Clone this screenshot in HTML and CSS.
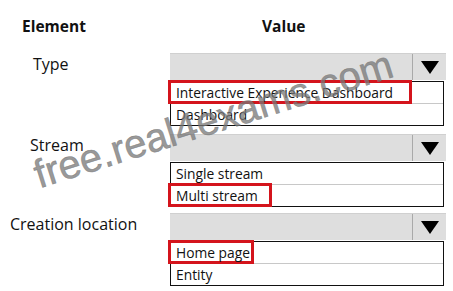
FILE: index.html
```html
<!DOCTYPE html>
<html lang="en">
<head>
    <meta charset="UTF-8">
    <title>Element / Value</title>
    <link rel="stylesheet" href="styles.css">
</head>
<body>
    <div class="sheet">
        <div class="head">
            <div class="col-label head-element">Element</div>
            <div class="col-value head-value">Value</div>
        </div>

        <div class="row row-type">
            <div class="col-label label-type">Type</div>
            <div class="col-value">
                <div class="drop">
                    <div class="drop-field"></div>
                    <div class="drop-btn"><span class="arrow"></span></div>
                </div>
                <div class="list">
                    <div class="item"><span class="pick pick-type">Interactive Experience Dashboard</span></div>
                    <div class="item">Dashboard</div>
                </div>
            </div>
        </div>

        <div class="row row-stream">
            <div class="col-label label-stream">Stream</div>
            <div class="col-value">
                <div class="drop">
                    <div class="drop-field"></div>
                    <div class="drop-btn"><span class="arrow"></span></div>
                </div>
                <div class="list">
                    <div class="item">Single stream</div>
                    <div class="item"><span class="pick pick-stream">Multi stream</span></div>
                </div>
            </div>
        </div>

        <div class="row row-location">
            <div class="col-label label-location">Creation location</div>
            <div class="col-value">
                <div class="drop">
                    <div class="drop-field"></div>
                    <div class="drop-btn"><span class="arrow"></span></div>
                </div>
                <div class="list">
                    <div class="item"><span class="pick pick-location">Home page</span></div>
                    <div class="item">Entity</div>
                </div>
            </div>
        </div>

        <div class="watermark">free.real4exams.com</div>
    </div>
</body>
</html>
```

FILE: styles.css
```css
body{
    margin: 0;
    background-color: white;
    font-family: 'Open Sans', 'Liberation Sans', sans-serif;
    color: #111;
}

.sheet{
    position: relative;
    width: 453px;
    height: 291px;
    overflow: hidden;
    padding-top: 15px;
    box-sizing: border-box;
}

.head{
    display: flex;
    height: 24px;
    font-weight: bold;
    font-size: 15.5px;
}

.col-label{
    width: 170px;
    flex-shrink: 0;
    font-size: 16px;
}

.col-value{
    width: 276px;
}

.head-element{
    padding-left: 22px;
    box-sizing: border-box;
    font-size: 15.5px;
}

.head-value{
    padding-left: 92px;
    box-sizing: border-box;
}

.row{
    display: flex;
}

.row-type{
    margin-top: 14px;
}

.row-stream{
    margin-top: 8px;
}

.row-location{
    margin-top: 6px;
}

.label-type{
    padding-left: 33px;
    box-sizing: border-box;
}

.label-stream{
    padding-left: 30px;
    box-sizing: border-box;
}

.label-location{
    padding-left: 10px;
    box-sizing: border-box;
}

.drop{
    display: flex;
    height: 27px;
    background-color: #dedede;
    border-top: 1px solid #d0d0d0;
    box-sizing: border-box;
}

.drop-field{
    flex: 1;
}

.drop-btn{
    width: 33px;
    border-left: 1px solid #a9a9a9;
    display: flex;
    align-items: center;
    justify-content: center;
}

.arrow{
    width: 0;
    height: 0;
    border-left: 9px solid transparent;
    border-right: 9px solid transparent;
    border-top: 13px solid black;
}

.list{
    width: 274px;
    margin-top: 1px;
    border: 1px solid #111;
    box-sizing: border-box;
    font-size: 13.8px;
}

.item{
    height: 21px;
    line-height: 21px;
    padding-left: 5px;
    white-space: nowrap;
}

.item + .item{
    border-top: 1px solid #c8c8c8;
}

.pick{
    display: inline-block;
    margin-left: -8px;
    padding-left: 5px;
    height: 24px;
    line-height: 19px;
    border: 3px solid #d4141c;
    box-sizing: border-box;
    position: relative;
    top: -2px;
}

.pick-type{
    width: 244px;
}

.pick-stream{
    width: 104px;
}

.pick-location{
    width: 86px;
}

.watermark{
    position: absolute;
    left: 42px;
    top: 152px;
    font-family: 'Liberation Sans', Arial, sans-serif;
    font-size: 40px;
    color: rgba(120, 120, 120, 0.75);
    -webkit-text-stroke: 0.6px rgba(120, 120, 120, 0.75);
    transform: rotate(-17.5deg);
    transform-origin: left bottom;
    white-space: nowrap;
    pointer-events: none;
}
```
